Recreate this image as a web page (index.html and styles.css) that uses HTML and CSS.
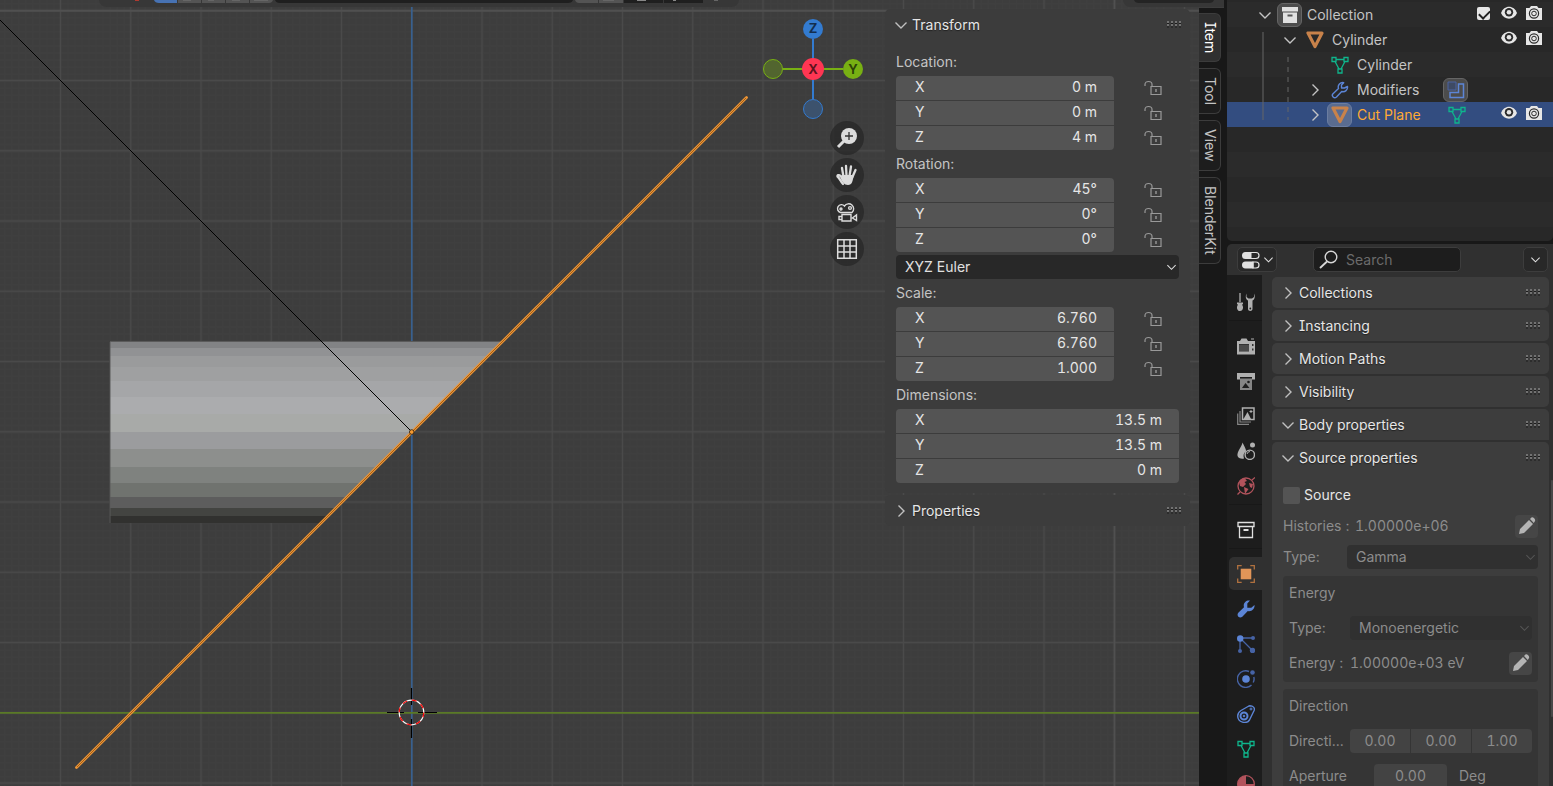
FILE: index.html
```html
<!DOCTYPE html>
<html lang="en">

<head>
    <meta charset="UTF-8">
    <meta name="viewport" content="width=device-width, initial-scale=1.0">
    <title>Cut Plane</title>
    <link rel="stylesheet" href="styles.css">
</head>

<body>
    <svg class="sprite" aria-hidden="true">
        <symbol id="down" viewBox="0 0 12 12"><path d="M.5 3.500 6 9 11.500 3.500" fill="none" stroke="currentColor" stroke-width="1.4"/></symbol>
        <symbol id="right" viewBox="0 0 12 12"><path d="M3.500.5 9 6 3.500 11.500" fill="none" stroke="currentColor" stroke-width="1.4"/></symbol>
        <symbol id="grip" viewBox="0 0 15 8">
            <path d="M0 1h2M4 1h2M8 1h2M12 1h2M0 4h2M4 4h2M8 4h2M12 4h2" stroke="#a8a8a8" stroke-width="1"/>
            <path d="M0 2.500h2M4 2.500h2M8 2.500h2M12 2.500h2M0 6h2M4 6h2M8 6h2M12 6h2" stroke="#1c1c1c" stroke-width="1"/>
        </symbol>
        <symbol id="unlock" viewBox="0 0 18 16">
            <path d="M1 6V4.500C1 .5 8 .5 8 4.500V6.500M7 6.500H17V14.500H7Z" fill="none" stroke="currentColor" stroke-width="1.2"/>
            <path d="M12 9v3" stroke="currentColor" stroke-width="1.4"/>
        </symbol>
        <symbol id="box" viewBox="0 0 18 18">
            <path d="M1 1.500h16v4H1zM2.500 5.500h13v11h-13z" fill="none" stroke="currentColor" stroke-width="1.3"/>
            <path d="M6.500 9h5" stroke="currentColor" stroke-width="2"/>
        </symbol>
        <symbol id="object" viewBox="0 0 18 18"><path d="M2 2h14L9 15.500z" fill="none" stroke="currentColor" stroke-width="3.200" stroke-linejoin="round"/></symbol>
        <symbol id="mesh" viewBox="0 0 18 18">
            <path d="M1 1.500h4v4H1zM13 1.500h4v4h-4zM7 13h4v4H7zM5 3.500h8M4 5.500 8 13M14 5.500 10 13" fill="none" stroke="currentColor" stroke-width="1.300"/>
        </symbol>
        <symbol id="wrench-line" viewBox="0 0 18 18">
            <path d="M16.500 5.500c.5 3.500-2.500 5.800-5.800 5L5.500 16c-2.300 2-5.500-1-3.500-3.300L7.500 7.500C6.300 3.700 9.500 1 12.700 1.700L10.500 4v3h3z" fill="none" stroke="currentColor" stroke-width="1.4" stroke-linejoin="round"/>
        </symbol>
        <symbol id="wrench" viewBox="0 0 18 18">
            <path d="M17.500 5c.6 4-3 7-6.700 6L5.300 16.700C2.500 19-1 15.500 1.300 12.700L7 7.200C5.700 3 9.300-.2 13 .6L10.300 3.500v4.200h4z" fill="currentColor"/>
        </symbol>
        <symbol id="eye" viewBox="0 0 18 16">
            <path d="M1 8C4-.5 14-.5 17 8 14 15.500 4 15.500 1 8z" fill="currentColor"/>
            <circle cx="9" cy="7.300" r="4.200" fill="#2b2b2b"/><circle cx="9" cy="7.300" r="2.300" fill="currentColor"/>
        </symbol>
        <symbol id="camera" viewBox="0 0 18 16">
            <path d="M1 3h3.500L6 1h6l1.500 2H17v12H1z" fill="currentColor"/>
            <circle cx="9" cy="8.500" r="4.600" fill="none" stroke="#2b2b2b" stroke-width="1.200"/>
            <circle cx="9" cy="8.500" r="2.300" fill="none" stroke="#2b2b2b" stroke-width="1"/>
        </symbol>
        <symbol id="pencil" viewBox="0 0 18 18">
            <path d="M1 17 2 12 11 3l4 4-9 9zM12 2l1.500-1.500c1.500-1 4.500 2 3.500 3.500L15.800 6z" fill="currentColor"/>
        </symbol>
    </svg>

    <main class="viewport">
        <svg class="scene" role="img" aria-label="3D viewport, right orthographic">
            <defs>
                <pattern id="minor" x="411.7" y="712.7" width="7.025" height="7.025" patternUnits="userSpaceOnUse">
                    <path d="M.5 0V8M0 .5H8" stroke="#424242" stroke-width="1" opacity=".5"/>
                </pattern>
                <pattern id="major" x="376.6" y="677.6" width="70.25" height="70.25" patternUnits="userSpaceOnUse">
                    <path d="M35.100 0V71M0 35.100H71" stroke="#4a4a4a" stroke-width="1.300"/>
                </pattern>
                <clipPath id="cut"><path d="M109 340H504L321 524H109z"/></clipPath>
            </defs>
            <rect width="100%" height="100%" fill="#3d3d3d"/>
            <rect width="100%" height="100%" fill="url(#minor)"/>
            <rect width="100%" height="100%" fill="url(#major)"/>
            <path d="M0 10.800H4000M1114.500 0V3000" stroke="#505050" stroke-width="1.700"/>
            <path d="M411.800 0V3000" stroke="#38608f" stroke-width="1.700"/>
            <path d="M0 712.800H4000" stroke="#5a7a26" stroke-width="1.700"/>

            <!-- cylinder faces -->
            <g clip-path="url(#cut)">
                <rect x="109.500" y="341" width="400" height="182" fill="#31312f"/>
                <rect x="110" y="341" width="400" height="7" fill="#828385"/>
                <rect x="110" y="348" width="400" height="8" fill="#919294"/>
                <rect x="110" y="356" width="400" height="11" fill="#9a9b9c"/>
                <rect x="110" y="367" width="400" height="14" fill="#9fa0a1"/>
                <rect x="110" y="381" width="400" height="16" fill="#a5a6a8"/>
                <rect x="110" y="397" width="400" height="17" fill="#abacae"/>
                <rect x="110" y="414" width="400" height="18" fill="#a8aaa8"/>
                <rect x="110" y="432" width="400" height="17" fill="#9b9c9e"/>
                <rect x="110" y="449" width="400" height="18" fill="#8d8f8d"/>
                <rect x="110" y="467" width="400" height="16" fill="#7f827f"/>
                <rect x="110" y="483" width="400" height="14" fill="#70736f"/>
                <rect x="110" y="497" width="400" height="11" fill="#5d5d5d"/>
                <rect x="110" y="508" width="400" height="8" fill="#434441"/>
                <path d="M110 523V341.500H510" fill="none" stroke="#5b5b5b" stroke-width="1"/>
            </g>
            <path d="M0 20 411.500 431.500" stroke="#000" stroke-width="1"/>
            <path d="M746.500 97.500 76.500 767.500" stroke="#ed9535" stroke-width="2.800" stroke-linecap="round"/>
            <path d="M746 98 77 767" stroke="#8a5015" stroke-width=".8"/>
            <circle cx="411.700" cy="432" r="2.300" fill="#f59b33" stroke="#2b1a08" stroke-width=".8"/>

            <!-- 3D cursor -->
            <path d="M387 712.500H404M418 712.500H437M411.500 688V705M411.500 719V738" stroke="#000" stroke-width="1.200"/>
            <circle cx="411.500" cy="712.500" r="12.300" fill="none" stroke="#fff" stroke-width="1.200"/>
            <circle cx="411.500" cy="712.500" r="12.300" fill="none" stroke="#f00" stroke-width="1.200" stroke-dasharray="4.830"/>

            <!-- bottom edge of the header bar -->
            <path d="M99 0H739Q738 7 731 7H107Q100 7 99 0z" fill="#373737"/>
            <path d="M154 0H177V3H159Q155 3 154 0z" fill="#4772b3"/>
            <path d="M178 0h23v3h-23zM202 0h23v3h-23zM226 0h23v3h-23zM250 0h23q-1 3-4 3h-19zM575 0h23v3h-19q-3 0-4-3zM599 0h24v3h-24z" fill="#545454"/>
            <path d="M275 0H573Q572 3 568 3H280Q276 3 275 0zM624 0h39v3h-39zM664 0h39v3h-39z" fill="#1f1f1f"/>
            <path d="M183 0h8M208 0h6M232 0h8M254 0h14M603 0h11M714 0h4" stroke="#666" stroke-width="2"/>
            <path d="M637 0h9M673 0h3" stroke="#888" stroke-width="2"/>
            <path d="M135 0h4" stroke="#b03a30" stroke-width="2"/>
            <path d="M1123 0H1224V7H1130Q1124 7 1123 0z" fill="#373737"/>
            <path d="M1134 0H1214Q1213 3 1209 3H1139Q1135 3 1134 0z" fill="#242424"/>
        </svg>

        <div class="nav">
            <svg class="axes" viewBox="0 0 92 92" role="img" aria-label="Orientation">
                <path d="M46 16V76" stroke="#337bd0" stroke-width="2"/>
                <path d="M16 46H76" stroke="#78b013" stroke-width="2"/>
                <circle cx="46" cy="86" r="9.500" fill="#3c526d" stroke="#337bd0"/>
                <circle cx="6" cy="46" r="9.500" fill="#52652f" stroke="#78b013"/>
                <circle cx="46" cy="6" r="10" fill="#337bd0"/>
                <circle cx="86" cy="46" r="10" fill="#78b013"/>
                <circle cx="46" cy="46" r="11" fill="#ff3653"/>
                <g class="axis-name"><text x="46" y="10">Z</text><text x="46" y="51">X</text><text x="86" y="51">Y</text></g>
            </svg>
            <button class="round" aria-label="Zoom">
                <svg width="22" height="22" viewBox="0 0 22 22"><path d="M2 20 8 14" stroke="#dcdcdc" stroke-width="3"/><circle cx="13" cy="9" r="8" fill="#dcdcdc"/><path d="M13 5v8M9 9h8" stroke="#333" stroke-width="1.300"/></svg>
            </button>
            <button class="round" aria-label="Move view">
                <svg width="22" height="22" viewBox="0 0 22 22"><path d="M7 20C5 18 3.500 14 1.500 12.500 1 11 3 10.500 4.500 11.800L7 14M7.500 13 6 4M10.500 12 10 2M13.500 12 15 2.500M16 14 19.500 6" fill="none" stroke="#dcdcdc" stroke-width="2.300" stroke-linecap="round"/><path d="M4 12.500 7 11H17.500C17 17 16 21 12 21 8 21 6 18 4 12.500z" fill="#dcdcdc"/></svg>
            </button>
            <button class="round" aria-label="Camera view">
                <svg width="22" height="22" viewBox="0 0 22 22" fill="none" stroke="#dcdcdc" stroke-width="1.400"><path d="M4.500 11.500A4 4 0 1 1 8.500 5 5 5 0 1 1 16 11.500zM6 13.500h9v6.500H6zM6 15.500H3v3h3M20.500 14v5.500L16.500 17z"/><circle cx="5" cy="8" r="1"/><circle cx="14" cy="7" r="1.400"/></svg>
            </button>
            <button class="round" aria-label="Perspective / orthographic">
                <svg width="22" height="22" viewBox="0 0 22 22"><path d="M1.700 1.700h18.600v18.600H1.700zM8 2v18M14 2v18M2 8h18M2 14h18" fill="none" stroke="#dcdcdc" stroke-width="1.500"/></svg>
            </button>
        </div>

        <aside class="sidebar">
            <section class="n-panel n-transform">
                <button class="panel-head"><svg class="chev"><use href="#down"/></svg>Transform<svg class="grip"><use href="#grip"/></svg></button>
                <div class="n-body">
                    <h3>Location:</h3>
                    <div class="vector">
                        <label class="field"><span>X</span><input type="text" value="0 m"></label><button class="lock" aria-label="Lock location X"><svg><use href="#unlock"/></svg></button>
                        <label class="field"><span>Y</span><input type="text" value="0 m"></label><button class="lock" aria-label="Lock location Y"><svg><use href="#unlock"/></svg></button>
                        <label class="field"><span>Z</span><input type="text" value="4 m"></label><button class="lock" aria-label="Lock location Z"><svg><use href="#unlock"/></svg></button>
                    </div>
                    <h3>Rotation:</h3>
                    <div class="vector">
                        <label class="field"><span>X</span><input type="text" value="45°"></label><button class="lock" aria-label="Lock rotation X"><svg><use href="#unlock"/></svg></button>
                        <label class="field"><span>Y</span><input type="text" value="0°"></label><button class="lock" aria-label="Lock rotation Y"><svg><use href="#unlock"/></svg></button>
                        <label class="field"><span>Z</span><input type="text" value="0°"></label><button class="lock" aria-label="Lock rotation Z"><svg><use href="#unlock"/></svg></button>
                    </div>
                    <div class="drop euler">
                        <select aria-label="Rotation mode"><option>XYZ Euler</option></select>
                        <svg><use href="#down"/></svg>
                    </div>
                    <h3>Scale:</h3>
                    <div class="vector">
                        <label class="field"><span>X</span><input type="text" value="6.760"></label><button class="lock" aria-label="Lock scale X"><svg><use href="#unlock"/></svg></button>
                        <label class="field"><span>Y</span><input type="text" value="6.760"></label><button class="lock" aria-label="Lock scale Y"><svg><use href="#unlock"/></svg></button>
                        <label class="field"><span>Z</span><input type="text" value="1.000"></label><button class="lock" aria-label="Lock scale Z"><svg><use href="#unlock"/></svg></button>
                    </div>
                    <h3>Dimensions:</h3>
                    <div class="vector wide">
                        <label class="field"><span>X</span><input type="text" value="13.5 m"></label>
                        <label class="field"><span>Y</span><input type="text" value="13.5 m"></label>
                        <label class="field"><span>Z</span><input type="text" value="0 m"></label>
                    </div>
                </div>
            </section>
            <section class="n-panel">
                <button class="panel-head"><svg class="chev"><use href="#right"/></svg>Properties<svg class="grip"><use href="#grip"/></svg></button>
            </section>
        </aside>

        <nav class="tabs">
            <button class="tab active">Item</button>
            <button class="tab">Tool</button>
            <button class="tab">View</button>
            <button class="tab">BlenderKit</button>
        </nav>
    </main>

    <div class="editors">
        <section class="outliner">
            <svg class="tree" width="30" height="90"><path d="M1 0V88" stroke="#666" /><path d="M26 25V88" stroke="#666" stroke-dasharray="5 5"/></svg>
            <div class="row">
                <button class="twist" aria-label="Collapse"><svg><use href="#down"/></svg></button>
                <span class="icon boxed"><svg viewBox="0 0 18 18"><path d="M1 1h16v4.500H1zM2 6.500h14V17H2z" fill="#e0e0e0"/><path d="M6.500 9.500h5" stroke="#555" stroke-width="2"/></svg></span>
                <span class="name">Collection</span>
                <span class="toggles">
                    <input type="checkbox" checked aria-label="Exclude from view layer">
                    <button aria-label="Hide"><svg><use href="#eye"/></svg></button>
                    <button aria-label="Disable in renders"><svg><use href="#camera"/></svg></button>
                </span>
            </div>
            <div class="row level1">
                <button class="twist" aria-label="Collapse"><svg><use href="#down"/></svg></button>
                <span class="icon orange"><svg><use href="#object"/></svg></span>
                <span class="name">Cylinder</span>
                <span class="toggles">
                    <button aria-label="Hide"><svg><use href="#eye"/></svg></button>
                    <button aria-label="Disable in renders"><svg><use href="#camera"/></svg></button>
                </span>
            </div>
            <div class="row level2">
                <span class="twist"></span>
                <span class="icon green"><svg><use href="#mesh"/></svg></span>
                <span class="name">Cylinder</span>
            </div>
            <div class="row level2">
                <button class="twist" aria-label="Expand"><svg><use href="#right"/></svg></button>
                <span class="icon blue"><svg><use href="#wrench-line"/></svg></span>
                <span class="name">Modifiers</span>
                <span class="icon extra boxed blue"><svg viewBox="0 0 18 18" fill="none" stroke="currentColor"><path d="M1 1h8v8H1z" fill="#3e4a64" stroke="#4a62a0"/><path d="M11.500 3h5v13.500H3v-5h8.500z" stroke-width="1.500"/></svg></span>
            </div>
            <div class="row level2 selected">
                <button class="twist" aria-label="Expand"><svg><use href="#right"/></svg></button>
                <span class="icon boxed orange"><svg><use href="#object"/></svg></span>
                <span class="name">Cut Plane</span>
                <span class="icon extra green"><svg><use href="#mesh"/></svg></span>
                <span class="toggles">
                    <button aria-label="Hide"><svg><use href="#eye"/></svg></button>
                    <button aria-label="Disable in renders"><svg><use href="#camera"/></svg></button>
                </span>
            </div>
        </section>

        <section class="properties">
            <header class="prop-header">
                <button class="editor-type" aria-label="Editor type">
                    <svg width="20" height="18" viewBox="0 0 20 18"><path d="M8 1.500h7a3 3 0 0 1 0 6H8zM12 11h3a3 3 0 0 1 0 6h-3z" fill="none" stroke="#e0e0e0" stroke-width="1.200"/><path d="M4.500 1h6v7h-6a3.500 3.500 0 0 1 0-7zM4.500 10.500h8v7h-8a3.500 3.500 0 0 1 0-7z" fill="#e0e0e0"/></svg>
                    <svg class="small"><use href="#down"/></svg>
                </button>
                <label class="search">
                    <svg width="19" height="19" viewBox="0 0 19 19"><circle cx="12" cy="7" r="5.800" fill="none" stroke="#d8d8d8" stroke-width="1.400"/><path d="M8 11.500 1 18" stroke="#d8d8d8" stroke-width="1.800"/></svg>
                    <input type="text" placeholder="Search" aria-label="Search">
                </label>
                <button class="options" aria-label="Options"><svg class="small"><use href="#down"/></svg></button>
            </header>

            <div class="prop-main">
                <nav class="prop-tabs">
                    <button aria-label="Tool"><svg viewBox="0 0 18 18"><path d="M3 0v9" stroke="currentColor" stroke-width="1.300"/><path d="M0 9.500h6V11l-1 .8C7 14 6 18 3 18S-1 14 1 11.800L0 11zM9.500.5C8 4 9 6.500 11 7.500V16c0 2.500 4.500 2.500 4.500 0V7.500c2-1 3-3.500 1.500-7V4l-2 1.500h-3.500L9.500 4z" fill="currentColor"/><circle cx="13.300" cy="15.500" r=".9" fill="#1d1d1d"/></svg></button>
                    <hr>
                    <button aria-label="Render"><svg viewBox="0 0 18 18"><path d="M0 4h3l1.500-2.500h5L11 4h7v13.500H0z" fill="currentColor"/><path d="M14 2h3" stroke="currentColor"/><path d="M2 7h10v7.500H2zM15 7h1.500v2H15zM15 11.500h1.500v2H15z" fill="#333"/><path d="M2 9h10M2 11h10M2 13h10" stroke="#777" stroke-width=".7"/></svg></button>
                    <button aria-label="Output"><svg viewBox="0 0 18 18"><path d="M0 1h18v6.500h-3V5H3v2.500H0z" fill="currentColor"/><path d="M3 6.500h12V18H3z" fill="#858585"/><path d="m5 16 3.500-5 4 5z" fill="#1d1d1d"/><circle cx="11.500" cy="10" r="1.300" fill="#1d1d1d"/></svg></button>
                    <button aria-label="View layer"><svg viewBox="0 0 18 18"><path d="M5.500 1h11.500v11.500H5.500z" fill="none" stroke="currentColor" stroke-width="1.500"/><path d="M6.500 12 10.500 5 14 12z" fill="currentColor"/><path d="M14 3v3M12.500 4.500h3" stroke="currentColor"/><path d="M3 4v11h11M.7 6.500v10.800H12" fill="none" stroke="#858585" stroke-width="1.200"/></svg></button>
                    <button aria-label="Scene"><svg viewBox="0 0 18 18"><path d="M5.500.5C7 4 9.500 7.500 9 9.500 6.500 11 6 13.500 7 16.500 2 17.500 0 14.500.5 12 1 8.500 5 4 5.500.5z" fill="currentColor"/><circle cx="15.500" cy="3" r="2.500" fill="currentColor"/><circle cx="12.800" cy="12.800" r="4.700" fill="none" stroke="currentColor" stroke-width="1.400"/><path d="M10 12q.5-2.500 3-2.500" stroke="currentColor" fill="none"/></svg></button>
                    <button class="red" aria-label="World"><svg viewBox="0 0 18 18"><circle cx="9" cy="9" r="8" fill="none" stroke="currentColor" stroke-width="1.300"/><path d="M2 5C3 2 6 1 8 1.500L10 4 7.500 5 9 7 6 10 3 9zM7 10l4.500 2L8 17zM12 6l4 1-1 4-2-1z" fill="currentColor"/><path d="m15 3 3-2.500M.5 17.500 3 15" stroke="currentColor" stroke-width="1.300"/></svg></button>
                    <hr>
                    <button class="white" aria-label="Collection"><svg><use href="#box"/></svg></button>
                    <hr>
                    <button class="current" aria-label="Object"><svg viewBox="0 0 18 18"><path d="M3.700 3.700h10.600v10.600H3.700z" fill="#e19558"/><path d="M.7 4.500V.7h4M13.300.7h4v3.800M17.300 13.500v3.800h-4M4.700 17.300h-4v-3.800" fill="none" stroke="#b0713f" stroke-width="1.300"/></svg></button>
                    <button class="blue" aria-label="Modifiers"><svg><use href="#wrench"/></svg></button>
                    <button class="blue" aria-label="Particles"><svg viewBox="0 0 18 18"><path d="M3 3h13M3 3v13M5 5l11 11" stroke="#4663a5" stroke-width="1.300"/><circle cx="3.200" cy="3.500" r="3.200" fill="currentColor"/><circle cx="16" cy="3" r="2" fill="#4663a5"/><circle cx="3" cy="16" r="2" fill="#4663a5"/><circle cx="15.500" cy="15.500" r="2.700" fill="#4663a5"/></svg></button>
                    <button class="blue" aria-label="Physics"><svg viewBox="0 0 18 18"><path d="M12 1.500A8.300 8.300 0 1 0 14.500 15" fill="none" stroke="#4663a5" stroke-width="1.400"/><path d="M16.800 7q.8 3-.6 5.500" fill="none" stroke="#4663a5" stroke-width="1.400"/><circle cx="9" cy="9" r="3.800" fill="currentColor"/><circle cx="15.500" cy="2.500" r="2.300" fill="#4663a5"/></svg></button>
                    <button class="blue" aria-label="Constraints"><svg viewBox="0 0 18 18" fill="none" stroke="currentColor"><path d="M13 .8c3 0 5 2 4.200 4.500L12.500 15C9.500 19.500.7 17.500.7 11 .7 8.500 2 6.800 4 5.500L11 1.500q1-.6 2-.7z" stroke-width="1.400"/><circle cx="7" cy="11" r="3.500" stroke-width="2"/><circle cx="7" cy="11" r=".8" fill="currentColor"/><path d="M14 2.500v3M12.500 4h3"/></svg></button>
                    <button class="green" aria-label="Data"><svg><use href="#mesh"/></svg></button>
                    <button class="red" aria-label="Material"><svg viewBox="0 0 18 18"><circle cx="9" cy="9" r="8.300" fill="none" stroke="currentColor" stroke-width="1.300"/><path d="M9 .7v16.600A8.300 8.300 0 0 1 9 .7zM9 9h8A8 8 0 0 1 9 17z" fill="currentColor"/></svg></button>
                </nav>

                <div class="panels">
                    <section class="panel"><button class="panel-head"><svg class="chev"><use href="#right"/></svg>Collections<svg class="grip"><use href="#grip"/></svg></button></section>
                    <section class="panel"><button class="panel-head"><svg class="chev"><use href="#right"/></svg>Instancing<svg class="grip"><use href="#grip"/></svg></button></section>
                    <section class="panel"><button class="panel-head"><svg class="chev"><use href="#right"/></svg>Motion Paths<svg class="grip"><use href="#grip"/></svg></button></section>
                    <section class="panel"><button class="panel-head"><svg class="chev"><use href="#right"/></svg>Visibility<svg class="grip"><use href="#grip"/></svg></button></section>
                    <section class="panel open"><button class="panel-head"><svg class="chev"><use href="#down"/></svg>Body properties<svg class="grip"><use href="#grip"/></svg></button></section>
                    <section class="panel open">
                        <button class="panel-head"><svg class="chev"><use href="#down"/></svg>Source properties<svg class="grip"><use href="#grip"/></svg></button>
                        <div class="source">
                            <label class="check"><input type="checkbox">Source</label>
                            <div class="line">
                                <span class="key">Histories :</span><span class="value">1.00000e+06</span>
                                <button class="edit" aria-label="Edit histories"><svg><use href="#pencil"/></svg></button>
                            </div>
                            <div class="line">
                                <label class="key" for="sourceType">Type:</label>
                                <div class="drop dim">
                                    <select id="sourceType"><option>Gamma</option></select>
                                    <svg><use href="#down"/></svg>
                                </div>
                            </div>
                            <div class="group">
                                <h4>Energy</h4>
                                <div class="line">
                                    <label class="key" for="energyType">Type:</label>
                                    <div class="drop dim">
                                        <select id="energyType"><option>Monoenergetic</option></select>
                                        <svg><use href="#down"/></svg>
                                    </div>
                                </div>
                                <div class="line">
                                    <span class="key">Energy :</span><span class="value">1.00000e+03 eV</span>
                                    <button class="edit" aria-label="Edit energy"><svg><use href="#pencil"/></svg></button>
                                </div>
                            </div>
                            <div class="group">
                                <h4>Direction</h4>
                                <div class="line">
                                    <span class="key">Directi...</span>
                                    <div class="triple">
                                        <input type="text" value="0.00" aria-label="Direction X">
                                        <input type="text" value="0.00" aria-label="Direction Y">
                                        <input type="text" value="1.00" aria-label="Direction Z">
                                    </div>
                                </div>
                                <div class="line">
                                    <label class="key aperture" for="aperture">Aperture</label>
                                    <input class="single" type="text" id="aperture" value="0.00">
                                    <span>Deg</span>
                                </div>
                            </div>
                        </div>
                    </section>
                </div>
                <div class="scrollbar"></div>
            </div>
        </section>
    </div>
</body>

</html>
```

FILE: styles.css
```css
* {
    box-sizing: border-box;
}

body {
    margin: 0;
    height: 100vh;
    display: flex;
    overflow: hidden;
    background-color: #181818;
    color: #c4c4c4;
    font-family: Inter, "Noto Sans", sans-serif;
    font-size: 14px;
    line-height: 24px;
    font-feature-settings: "cv08";
}

button,
input,
select {
    font: inherit;
    font-feature-settings: inherit;
    color: inherit;
    margin: 0;
    padding: 0;
    border: none;
    background: none;
    appearance: none;
    min-width: 0;
}

button {
    display: flex;
    align-items: center;
    justify-content: center;
}

h3,
h4 {
    margin: 0;
    font-size: 14px;
    font-weight: 400;
}

.sprite {
    display: none;
}

.orange {
    color: #c8824a;
}

.green {
    color: #0fb58c;
}

.blue {
    color: #5c85d6;
}

.red {
    color: #b2535c;
}

.white {
    color: #e0e0e0;
}

/* 3D viewport */
.viewport {
    position: relative;
    flex: 1;
    display: flex;
    justify-content: flex-end;
    align-items: flex-start;
    overflow: hidden;
}

.scene {
    position: absolute;
    inset: 0;
    width: 100%;
    height: 100%;
}

.nav {
    position: relative;
    display: flex;
    flex-direction: column;
    align-items: flex-end;
    gap: 3px;
    padding: 23px 21px 0 0;
}

.axes {
    width: 92px;
    height: 92px;
    margin: 0 5px 3px 0;
    overflow: visible;
}

.axis-name {
    font-size: 13px;
    font-weight: 700;
    text-anchor: middle;
    fill: rgba(0, 0, 0, 0.65);
}

.round {
    width: 34px;
    height: 34px;
    border-radius: 50%;
    background-color: rgba(35, 35, 35, 0.65);
}

.sidebar {
    position: relative;
    width: 305px;
    margin-top: 9px;
}

.n-panel {
    background-color: #3c3c3c;
    border-radius: 5px;
    margin-bottom: 2px;
}

.n-transform {
    padding-bottom: 10px;
}

.panel-head {
    width: 100%;
    height: 31px;
    justify-content: flex-start;
    gap: 5px;
    padding: 0 8px 0 10px;
    color: #e6e6e6;
    text-shadow: 0 1px 1px #222;
}

.chev {
    width: 12px;
    height: 12px;
    color: #c0c0c0;
}

.grip {
    width: 15px;
    height: 8px;
    margin-left: auto;
}

.n-body {
    padding: 8px 11px 0;
}

.n-body h3 {
    line-height: 28px;
}

.vector {
    display: grid;
    grid-template-columns: minmax(0, 1fr) 65px;
    gap: 1px 0;
}

.vector.wide {
    grid-template-columns: 1fr;
}

.field {
    display: flex;
    height: 24px;
    padding: 0 17px 0 19px;
    background-color: #545454;
    color: #e6e6e6;
    line-height: 22px;
}

.field input {
    flex: 1;
    height: 22px;
    text-align: right;
    font-feature-settings: "tnum";
}

.field:first-child {
    border-radius: 4px 4px 0 0;
}

.vector.wide .field:last-child,
.field:nth-last-child(2):nth-child(5) {
    border-radius: 0 0 4px 4px;
}

.lock {
    padding-left: 13px;
    color: #999;
}

.lock svg {
    width: 18px;
    height: 16px;
}

.drop {
    display: grid;
    height: 24px;
    background-color: #282828;
    border-radius: 4px;
    color: #e0e0e0;
    align-items: center;
}

.drop select,
.drop svg {
    grid-area: 1 / 1;
}

.drop select {
    width: 100%;
    height: 24px;
    padding: 0 9px 2px;
}

.drop svg {
    width: 9px;
    height: 12px;
    margin-right: 3px;
    justify-self: end;
    pointer-events: none;
}

.euler {
    margin: 3px 0 0;
}

.tabs {
    position: relative;
    align-self: stretch;
    width: 25px;
    margin: 8px 0 0 9px;
    padding: 5px 3px 0 0;
    display: flex;
    flex-direction: column;
    gap: 6px;
    background-color: #181818;
}

.tab {
    writing-mode: vertical-rl;
    width: 22px;
    padding: 8px 0;
    line-height: 20px;
    background-color: #1d1d1d;
    border: 1px solid #3c3c3c;
    border-left: none;
    border-radius: 0 6px 6px 0;
}

.tab.active {
    background-color: #303030;
    color: #fff;
}

/* outliner */
.editors {
    width: 326px;
    margin-left: 3px;
    display: flex;
    flex-direction: column;
    gap: 3px;
}

.outliner {
    position: relative;
    height: 241px;
    flex-shrink: 0;
    padding-top: 2px;
    background: repeating-linear-gradient(#2b2b2b 0 25px, #282828 25px 50px) 0 2px;
    border-radius: 0 0 5px 5px;
}

.tree {
    position: absolute;
    left: 35px;
    top: 32px;
}

.row {
    display: flex;
    align-items: center;
    height: 25px;
    padding: 0 7px 0 25px;
}

.level1 {
    padding-left: 50px;
}

.level2 {
    padding-left: 75px;
}

.row.selected {
    background-color: #334d80;
}

.selected .name {
    color: #ffaa33;
}

.twist {
    width: 25px;
}

.twist svg {
    width: 12px;
    height: 12px;
}

.icon {
    width: 25px;
    height: 24px;
    margin-right: 5px;
    display: flex;
    align-items: center;
    justify-content: center;
}

.icon svg {
    width: 18px;
    height: 18px;
}

.boxed {
    background-color: #4c4c4c;
    border: 1px solid #656565;
    border-radius: 6px;
}

.selected .boxed {
    background-color: #5a6c90;
    border-color: #6b7da0;
}

.extra {
    margin: 0 0 0 24px;
}

.toggles {
    margin-left: auto;
    display: flex;
    align-items: center;
    height: 22px;
    align-self: flex-start;
    color: #e6e6e6;
}

.toggles button {
    width: 25px;
}

.toggles svg {
    width: 18px;
    height: 16px;
}

.toggles input {
    width: 13px;
    height: 13px;
    margin: 0 6px;
    background-color: #e6e6e6;
    border-radius: 2px;
}

.toggles input:checked::after {
    content: "";
    display: block;
    width: 9px;
    height: 5px;
    margin: 3px 2px;
    border: solid #222;
    border-width: 0 0 2px 2px;
    transform: rotate(-45deg);
}

/* properties editor */
.properties {
    flex: 1;
    min-height: 0;
    display: flex;
    flex-direction: column;
    background-color: #303030;
    border-radius: 5px 0 0 0;
}

.prop-header {
    display: flex;
    align-items: center;
    height: 31px;
    flex-shrink: 0;
    padding: 0 5px 0 10px;
}

.editor-type,
.options,
.search {
    height: 25px;
    background-color: #282828;
    border: 1px solid #3d3d3d;
    border-radius: 5px;
}

.editor-type {
    width: 40px;
    gap: 3px;
}

.small {
    width: 9px;
    height: 9px;
    color: #e0e0e0;
}

.search {
    display: flex;
    align-items: center;
    gap: 8px;
    width: 148px;
    margin-left: 36px;
    padding: 0 5px;
    background-color: #1d1d1d;
}

.search input {
    flex: 1;
    height: 22px;
}

.search input::placeholder {
    color: #6b6b6b;
    opacity: 1;
}

.options {
    width: 25px;
    margin-left: auto;
}

.prop-main {
    flex: 1;
    min-height: 0;
    display: flex;
    overflow: hidden;
}

.prop-tabs {
    width: 35px;
    flex-shrink: 0;
    padding: 10px 0 0 2px;
    background-color: #1d1d1d;
    color: #b0b0b0;
    overflow: hidden;
}

.prop-tabs button {
    width: 33px;
    height: 33px;
    margin-bottom: 2px;
    border-radius: 5px 0 0 5px;
}

.prop-tabs .current {
    background-color: #303030;
}

.prop-tabs svg {
    width: 18px;
    height: 18px;
}

.prop-tabs hr {
    margin: 0 0 8px;
    border: none;
    border-top: 1px solid #181818;
}

.panels {
    flex: 1;
    min-width: 0;
    padding: 2px 0 0 10px;
}

.panel {
    margin-bottom: 2px;
    background-color: #3d3d3d;
    border-radius: 5px;
}

.panel.open {
    border-radius: 5px 5px 0 0;
}

.source {
    display: flex;
    flex-direction: column;
    gap: 7px;
    padding: 10px 11px;
    color: #8c8c8c;
}

.check {
    display: flex;
    align-items: center;
    gap: 4px;
    color: #e6e6e6;
}

.check input {
    width: 17px;
    height: 17px;
    background-color: #545454;
    border-radius: 2px;
}

.line {
    display: flex;
    align-items: center;
    height: 24px;
}

.key {
    width: 64px;
    flex-shrink: 0;
    white-space: nowrap;
}

.value {
    padding-left: 8px;
    font-feature-settings: "tnum";
    white-space: nowrap;
}

.edit {
    width: 23px;
    height: 23px;
    margin-left: auto;
    background-color: #464646;
    border-radius: 4px;
    color: #b4b4b4;
}

.edit svg {
    width: 18px;
    height: 18px;
}

.dim {
    flex: 1;
    background-color: #303030;
    color: #8c8c8c;
}

.dim svg {
    color: #555;
}

.group {
    display: flex;
    flex-direction: column;
    gap: 11px;
    padding: 5px 6px 7px;
    background-color: #353535;
    border-radius: 4px;
}

.group .key {
    width: 61px;
}

.group .value {
    padding-left: 0;
}

.triple {
    flex: 1;
    min-width: 0;
    display: flex;
    gap: 1px;
    border-radius: 4px;
    overflow: hidden;
}

.triple input,
.single {
    height: 24px;
    background-color: #434343;
    text-align: center;
    font-feature-settings: "tnum";
}

.triple input {
    flex: 1;
}

.group .aperture {
    width: 85px;
}

.single {
    width: 73px;
    margin-right: 12px;
    border-radius: 4px 4px 0 0;
}

.scrollbar {
    width: 2px;
    height: 237px;
    margin: 205px 0 0 2px;
    background-color: #484848;
    border-radius: 2px;
}
```
